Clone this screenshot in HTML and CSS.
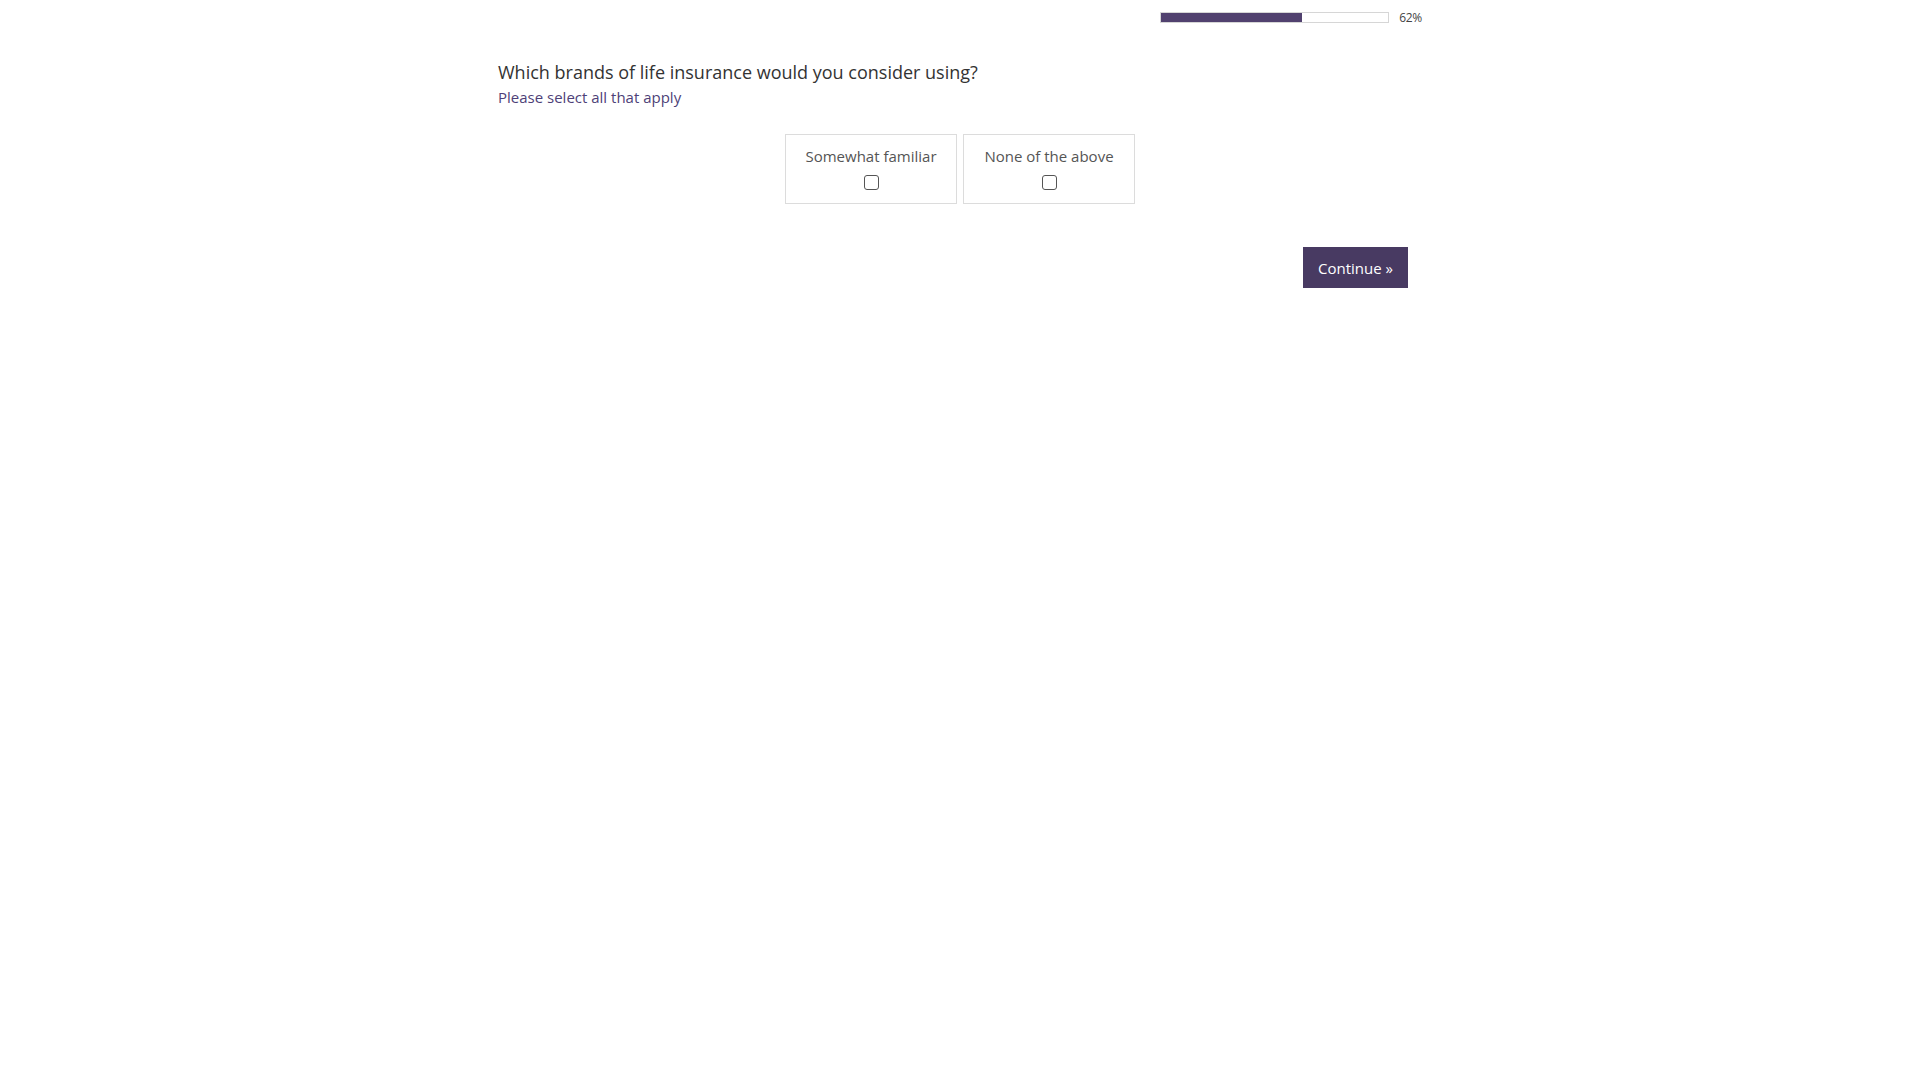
FILE: index.html
```html
<!DOCTYPE html>
<html lang="en">
<head>
<meta charset="utf-8">
<title>Survey</title>
<link rel="stylesheet" href="styles.css">
</head>
<body>
<div class="page">
  <div class="progress-row">
    <div class="progress-bar"><div class="progress-fill" style="width:62%"></div></div>
    <span class="progress-text">62%</span>
  </div>
  <h1 class="question">Which brands of life insurance would you consider using?</h1>
  <p class="instruction">Please select all that apply</p>
  <div class="options">
    <label class="option">
      <span class="option-label">Somewhat familiar</span>
      <span class="checkbox"></span>
    </label>
    <label class="option">
      <span class="option-label">None of the above</span>
      <span class="checkbox"></span>
    </label>
  </div>
  <div class="actions">
    <button class="continue">Continue »</button>
  </div>
</div>
</body>
</html>
```
FILE: styles.css
```css
html, body {
  margin: 0;
  padding: 0;
  background: #fff;
}
body {
  font-family: "Open Sans", "Liberation Sans", sans-serif;
  color: #333;
}
.page {
  width: 924px;
  margin: 0 auto;
}
.progress-row {
  display: flex;
  justify-content: flex-end;
  align-items: center;
  gap: 10px;
  padding-top: 12px;
  height: 11px;
}
.progress-bar {
  width: 227px;
  height: 9px;
  border: 1px solid #d6d6d6;
  background: #fff;
}
.progress-fill {
  height: 100%;
  background: #51416f;
}
.progress-text {
  font-size: 12px;
  color: #444;
  letter-spacing: -0.3px;
}
.question {
  margin: 36px 0 0;
  font-size: 18px;
  font-weight: 400;
  line-height: 26px;
  color: #333;
}
.instruction {
  margin: 2px 0 0;
  font-size: 15px;
  line-height: 20px;
  color: #4e3f78;
}
.options {
  display: flex;
  justify-content: center;
  gap: 6px;
  margin-top: 27px;
}
.option {
  box-sizing: border-box;
  width: 172px;
  height: 70px;
  border: 1px solid #dcdcdc;
  display: flex;
  flex-direction: column;
  align-items: center;
  padding-top: 11px;
}
.option-label {
  font-size: 15px;
  line-height: 20px;
  color: #555;
}
.checkbox {
  box-sizing: border-box;
  width: 15px;
  height: 15px;
  border: 1.5px solid #555;
  border-radius: 3px;
  margin-top: 9px;
}
.actions {
  display: flex;
  justify-content: flex-end;
  padding-right: 14px;
  margin-top: 43px;
}
.continue {
  width: 105px;
  height: 41px;
  background: #483a62;
  color: #fff;
  border: none;
  font-family: "Open Sans", "Liberation Sans", sans-serif;
  font-size: 15px;
  padding: 0;
}
```
